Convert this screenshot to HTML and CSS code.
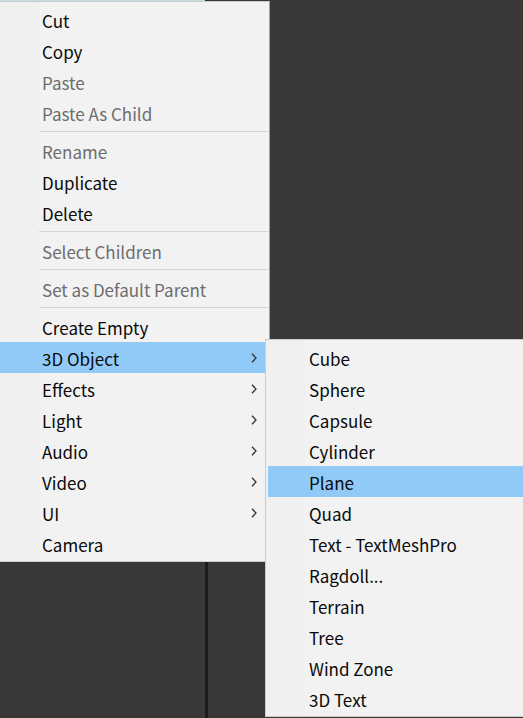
FILE: index.html
```html
<!DOCTYPE html>
<html>
<head>
<meta charset="utf-8">
<link rel="stylesheet" href="styles.css">
</head>
<body>
<div class="scene">
  <div class="topline"></div>
  <div class="divider"></div>

  <div class="menu main">
    <div class="item">Cut</div>
    <div class="item">Copy</div>
    <div class="item disabled">Paste</div>
    <div class="item disabled">Paste As Child</div>
    <div class="sep"></div>
    <div class="item disabled">Rename</div>
    <div class="item">Duplicate</div>
    <div class="item">Delete</div>
    <div class="sep"></div>
    <div class="item disabled">Select Children</div>
    <div class="sep"></div>
    <div class="item disabled">Set as Default Parent</div>
    <div class="sep"></div>
    <div class="item">Create Empty</div>
    <div class="item sub active">3D Object<svg class="chev" viewBox="0 0 6 10"><path d="M1 0.8 L5 5 L1 9.2"/></svg></div>
    <div class="item sub">Effects<svg class="chev" viewBox="0 0 6 10"><path d="M1 0.8 L5 5 L1 9.2"/></svg></div>
    <div class="item sub">Light<svg class="chev" viewBox="0 0 6 10"><path d="M1 0.8 L5 5 L1 9.2"/></svg></div>
    <div class="item sub">Audio<svg class="chev" viewBox="0 0 6 10"><path d="M1 0.8 L5 5 L1 9.2"/></svg></div>
    <div class="item sub">Video<svg class="chev" viewBox="0 0 6 10"><path d="M1 0.8 L5 5 L1 9.2"/></svg></div>
    <div class="item sub">UI<svg class="chev" viewBox="0 0 6 10"><path d="M1 0.8 L5 5 L1 9.2"/></svg></div>
    <div class="item">Camera</div>
  </div>

  <div class="menu submenu">
    <div class="item">Cube</div>
    <div class="item">Sphere</div>
    <div class="item">Capsule</div>
    <div class="item">Cylinder</div>
    <div class="item active">Plane</div>
    <div class="item">Quad</div>
    <div class="item">Text - TextMeshPro</div>
    <div class="item">Ragdoll...</div>
    <div class="item">Terrain</div>
    <div class="item">Tree</div>
    <div class="item">Wind Zone</div>
    <div class="item">3D Text</div>
  </div>
</div>
</body>
</html>
```

FILE: styles.css
```css
html, body {
  margin: 0;
  padding: 0;
  background: #383838;
}

.scene {
  position: relative;
  width: 523px;
  height: 718px;
  overflow: hidden;
  background: #383838;
  font-family: "Noto Sans CJK KR", "Noto Sans", sans-serif;
  font-size: 17px;
}

.topline {
  position: absolute;
  left: 0;
  top: 0;
  width: 205px;
  height: 1px;
  background: #c4dfe3;
}

.divider {
  position: absolute;
  left: 205px;
  top: 560px;
  width: 3px;
  height: 158px;
  background: #1c1c1c;
}

.menu {
  position: absolute;
  box-sizing: border-box;
  display: flex;
  flex-direction: column;
  padding: 2px 0;
  border: 1px solid #cccccc;
  background: linear-gradient(to right, #f0f0f0 38px, #f2f2f2 38px);
}

.main {
  left: -1px;
  top: 1px;
  width: 271px;
  height: 561px;
  border-right-color: #a0a0a0;
}

.submenu {
  left: 265px;
  top: 339px;
  width: 262px;
  height: 378px;
  padding-left: 2px;
  background: linear-gradient(to right, #f0f0f0 39px, #f2f2f2 39px);
}

.item {
  position: relative;
  flex: none;
  height: 31px;
  line-height: 33px;
  padding-left: 42px;
  color: #0a0a0a;
  white-space: nowrap;
}

.submenu .item {
  padding-left: 41px;
}

.item.disabled {
  color: #6d6d6d;
}

.item.active {
  background: #91c9f7;
}

.main .item.active {
  margin-right: 4px;
}

.chev {
  position: absolute;
  left: 251px;
  top: 11px;
  width: 6px;
  height: 10px;
  fill: none;
  stroke: #333333;
  stroke-width: 1.3;
}

.sep {
  flex: none;
  height: 1px;
  margin: 3px 0 3px 39px;
  background: #d7d7d7;
}
```
